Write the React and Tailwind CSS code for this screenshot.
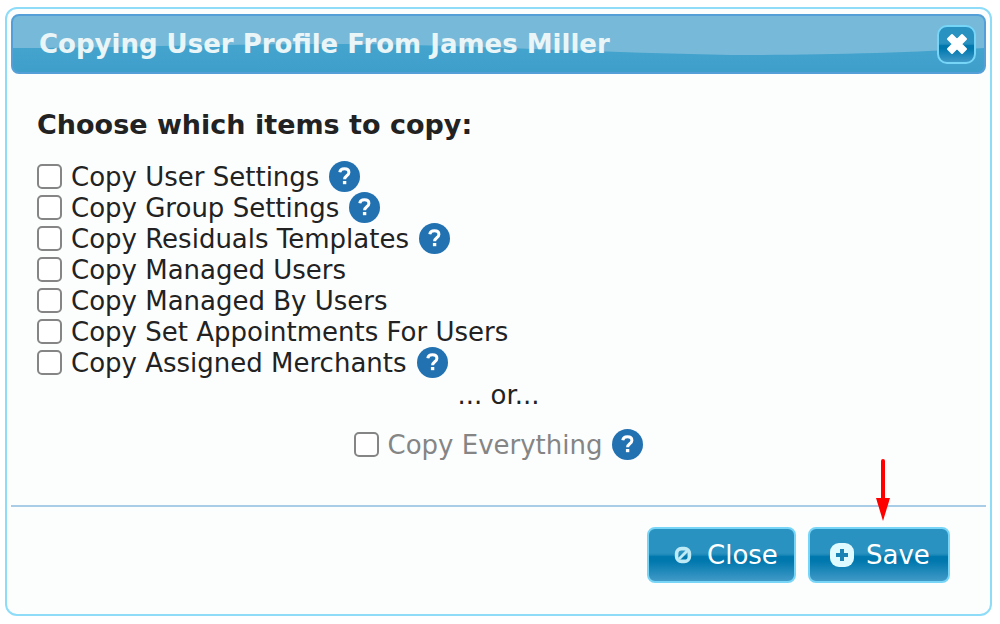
import { useState } from 'react';

const ITEMS = [
  { id: 'userSettings', label: 'Copy User Settings', help: true },
  { id: 'groupSettings', label: 'Copy Group Settings', help: true },
  { id: 'residuals', label: 'Copy Residuals Templates', help: true },
  { id: 'managed', label: 'Copy Managed Users' },
  { id: 'managedBy', label: 'Copy Managed By Users' },
  { id: 'appointments', label: 'Copy Set Appointments For Users' },
  { id: 'merchants', label: 'Copy Assigned Merchants', help: true },
];

// Glossy fill: flat top half, hard edge in the middle, fading lighter to the bottom
const GLOSS =
  'border-2 border-[#77d5f7] bg-[linear-gradient(#2a92c0_0%,#2a92c0_46%,#1b88b9_50%,#0078ae_53%,#0078ae_62%,#419ac7_100%)]';

const BUTTON = `flex h-14 items-center rounded-lg text-white ${GLOSS}`;

const HelpButton = ({ label }) => (
  <button
    type="button"
    aria-label={`Help: ${label}`}
    className="flex size-[31px] items-center justify-center rounded-full bg-[#2271b1]"
  >
    <svg viewBox="0 0 31 31" className="size-[31px]" fill="none" stroke="#fff" strokeWidth="3">
      <path d="M10.8 11.2C11.1 8.8 13 7.8 15.4 7.8c2.6 0 4.5 1.3 4.5 3.6 0 3.4-4.3 3.3-4.3 6.8" />
      <path d="M13.9 21.6h3.4" strokeWidth="3.2" />
    </svg>
  </button>
);

const CopyOption = ({ id, label, help, muted, checked, onChange }) => (
  <div className="flex h-[31px] items-center">
    <input
      id={id}
      type="checkbox"
      checked={checked}
      onChange={onChange}
      className="size-[25px] shrink-0 appearance-none rounded-[5px] border-2 border-[#858585] bg-white checked:bg-[#2271b1]"
    />
    <label htmlFor={id} className={`mr-[10px] ml-[9px] pt-[2px] ${muted ? 'text-[#858585]' : ''}`}>
      {label}
    </label>
    {help && <HelpButton label={label} />}
  </div>
);

const App = () => {
  const [selected, setSelected] = useState({});

  const toggle = (id) => {
    setSelected(prev => ({ ...prev, [id]: !prev[id] }));
  };

  return (
    <div className="bg-white pt-[7px] pr-2 pb-2 pl-[5px] font-['DejaVu_Sans',Verdana,sans-serif] text-[26px] leading-[31px] text-[#222]">
      <div
        role="dialog"
        aria-labelledby="dialog-title"
        className="rounded-xl border-2 border-[#8fdcf9] bg-[#fcfefe] p-1 pt-[5px]"
      >
        {/* Title bar */}
        <div className="relative flex h-[60px] items-center justify-between overflow-hidden rounded-lg border-2 border-[#559fd8] bg-linear-to-b from-[#49aad0] to-[#3f9fcb] pr-2 pl-[26px]">
          <svg
            aria-hidden="true"
            viewBox="0 0 974 56"
            preserveAspectRatio="none"
            className="absolute inset-0 size-full"
          >
            <path d="M0 0H974V32C900 37 800 39 720 39C560 36 440 28 320 28C200 28 100 32 0 32Z" fill="#77b9d9" />
          </svg>
          <h1 id="dialog-title" className="relative font-bold text-[#eaf5f7]">
            Copying User Profile From James Miller
          </h1>
          <button
            type="button"
            aria-label="Close dialog"
            className={`relative flex size-[39px] items-center justify-center rounded-[10px] ${GLOSS}`}
          >
            <svg viewBox="0 0 22 22" className="size-[22px]" fill="#fff" stroke="#fff" strokeWidth="2" strokeLinejoin="round">
              <path d="M6 2l5 5 5-5 4 4-5 5 5 5-4 4-5-5-5 5-4-4 5-5-5-5z" />
            </svg>
          </button>
        </div>

        {/* Options */}
        <div className="px-[26px] pt-[35px] pb-[45px]">
          <h2 className="mb-[21px] text-[27px] font-bold">Choose which items to copy:</h2>
          {ITEMS.map(item => (
            <CopyOption
              key={item.id}
              {...item}
              checked={!!selected[item.id]}
              onChange={() => toggle(item.id)}
            />
          ))}
          <p className="mt-[2px] text-center">... or...</p>
          <div className="mt-[18px] flex justify-center">
            <CopyOption
              id="everything"
              label="Copy Everything"
              help
              muted
              checked={!!selected.everything}
              onChange={() => toggle('everything')}
            />
          </div>
        </div>

        {/* Buttons */}
        <div className="flex justify-end gap-3 border-t-2 border-[#a9cde6] pt-5 pr-9 pb-[27px]">
          <button type="button" className={`${BUTTON} w-[149px] pl-[25px]`}>
            <svg viewBox="0 0 18 18" className="mr-[15px] size-[18px]" fill="none" stroke="#bdeaf5" strokeWidth="3.6">
              <rect x="2.6" y="2.6" width="12.8" height="12.8" rx="5" />
              <path d="M5 13l8-8" strokeWidth="2.8" />
            </svg>
            Close
          </button>
          <div className="relative">
            <button type="button" className={`${BUTTON} w-[142px] pl-5`}>
              <svg viewBox="0 0 24 24" className="mr-3 size-6">
                <rect width="24" height="24" rx="9" fill="#e0fbff" />
                <path d="M12 6v12M6 12h12" stroke="#1c84b4" strokeWidth="4" />
              </svg>
              Save
            </button>
            <svg
              aria-hidden="true"
              viewBox="0 0 14 62"
              className="pointer-events-none absolute -top-[68px] left-[68px] h-[62px] w-[14px]"
            >
              <path d="M7 2v40" stroke="#f00" strokeWidth="4" strokeLinecap="round" />
              <path d="M0 39h14L7 62z" fill="#f00" />
            </svg>
          </div>
        </div>
      </div>
    </div>
  );
};

export default App;
